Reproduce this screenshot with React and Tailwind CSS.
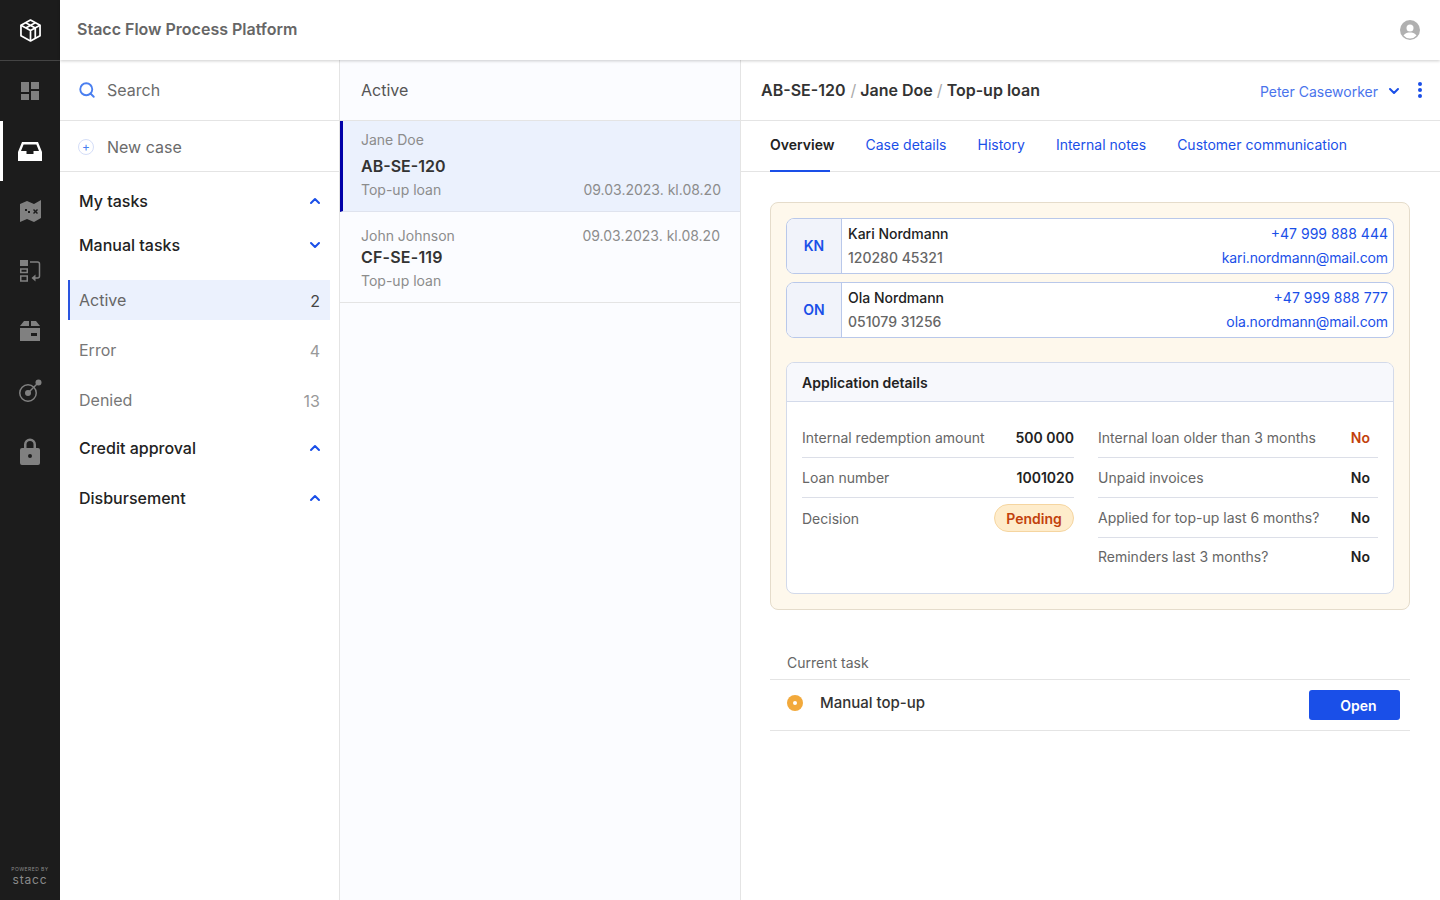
import { ChevronDown, ChevronUp, Search } from 'lucide-react';

const railIcons = [
  <svg key="dash" viewBox="0 0 18 18" className="w-[18px] h-[18px]" fill="#808080">
    <path d="M0 0h8v10H0zM10 0h8v7h-8zM0 12h8v6H0zM10 9h8v9h-8z" />
  </svg>,
  <svg key="inbox" viewBox="0 0 24 19" className="w-6 h-[19px]" fill="#fff">
    <path fillRule="evenodd" d="M4 0h16l4 10v9H0v-9zM5.600 2.400 3 9h5.500v3h7V9H21l-2.600-6.600z" />
  </svg>,
  <svg key="map" viewBox="0 0 21 22" className="w-[21px] h-[22px]" fill="#808080">
    <path fillRule="evenodd" d="M0 4 7 1l7 3 7-4v18l-7 4-7-3-7 3zM5 9h2v2H5zM8 11h2v2H8zM14 9l1.500 1.500L17 9l1 1-1.500 1.500L18 13l-1 1-1.500-1.500L14 14l-1-1 1.500-1.500L13 10z" />
  </svg>,
  <svg key="steps" viewBox="0 0 21 22" className="w-[21px] h-[22px]" fill="none">
    <path d="M0 0h8v6H0z" fill="#808080" />
    <path d="M.75 9h6.500v3.500H.75zM.75 16h6.500v5H.75z" stroke="#808080" strokeWidth="1.500" />
    <path d="M10 2h7.500a2 2 0 0 1 2 2v12a2 2 0 0 1-2 2H13" stroke="#808080" strokeWidth="1.500" />
    <path d="M15.500 14.500 11.500 18l4 3.500z" fill="#808080" />
  </svg>,
  <svg key="box" viewBox="0 0 20 20" className="w-5 h-5" fill="#808080">
    <path fillRule="evenodd" d="M4 0h5v5H0zM11 0h5l4 5h-9zM0 7h20v13H0zM11 12v3h6v-3z" />
  </svg>,
  <svg key="target" viewBox="0 0 24 24" className="w-6 h-6" fill="none">
    <circle cx="10" cy="14" r="8.250" stroke="#808080" strokeWidth="1.500" />
    <circle cx="10" cy="14" r="3" fill="#808080" />
    <path d="M10 14 20 4" stroke="#808080" strokeWidth="1.500" />
    <circle cx="20.500" cy="3.500" r="3" fill="#808080" />
  </svg>,
  <svg key="lock" viewBox="0 0 20 27" className="w-5 h-[27px]" fill="#808080">
    <path fillRule="evenodd" d="M4 10V6.500a6 6 0 0 1 12 0V10h2a2 2 0 0 1 2 2v13a2 2 0 0 1-2 2H2a2 2 0 0 1-2-2V12a2 2 0 0 1 2-2zM6.500 10h7V6.500a3.500 3.500 0 0 0-7 0zM10 16a2 2 0 1 0 0 4 2 2 0 0 0 0-4z" />
  </svg>,
];

function Rail() {
  return (
    <div className="w-[60px] shrink-0 bg-[#1c1c1c] flex flex-col">
      <div className="h-[61px] flex items-center justify-center border-b border-[#444]">
        <svg viewBox="0 0 22 24" className="w-[21px] h-[23px]" fill="none" stroke="#fff" strokeWidth="1.800" strokeLinejoin="round">
          <path d="M11 1 21 6.500v11L11 23 1 17.500v-11z" />
          <path d="M1 6.500 11 12l10-5.500M11 12v11M6 3.800l10 5.500v11M16 3.800 6 9.300" />
        </svg>
      </div>
      {railIcons.map((icon, i) => (
        <div
          key={i}
          className={`h-[60px] flex items-center justify-center border-l-[3px] pr-[3px] ${i === 1 ? 'border-white' : 'border-transparent'}`}
        >
          {icon}
        </div>
      ))}
      <div className="mt-auto pb-[14px] flex flex-col items-center text-[#8a8a8a]">
        <span className="text-[5px] leading-[6px] tracking-[0.45px] mb-[2px]">POWERED BY</span>
        <span className="text-[12px] leading-[12px] tracking-[0.8px]">stacc</span>
      </div>
    </div>
  );
}

function Group({ label, open, className }) {
  return (
    <div className={`flex items-center justify-between pl-[19px] pr-[16px] ${className}`}>
      <span className="text-[16px] font-medium text-[#222]">{label}</span>
      {open ? (
        <ChevronDown size={16} strokeWidth={3} className="text-[#1a4fe8]" />
      ) : (
        <ChevronUp size={16} strokeWidth={3} className="text-[#1a4fe8]" />
      )}
    </div>
  );
}

function FilterRow({ label, count, active }) {
  return (
    <div
      className={`h-10 ml-2 mr-[9px] flex items-center justify-between pr-[10px] text-[16px] ${
        active ? 'bg-[#ebf1fd] border-l-2 border-[#2a55e0] pl-[9px] text-[#666]' : 'pl-[11px] text-[#777]'
      }`}
    >
      <span>{label}</span>
      <span className={`mt-[2px] ${active ? 'text-[#444]' : 'text-[#999]'}`}>{count}</span>
    </div>
  );
}

function Sidebar() {
  return (
    <div className="w-[280px] shrink-0 border-r border-[#e4e4e4] flex flex-col">
      <div className="h-[61px] flex items-center gap-[11px] pl-[18px] border-b border-[#e4e4e4]">
        <Search size={18} strokeWidth={2.5} className="text-[#4a7ff0]" />
        <span className="text-[16px] text-[#6b6b6b]">Search</span>
      </div>
      <div className="h-[51px] flex items-center gap-[13px] pl-[18px] pt-[2px] border-b border-[#e4e4e4]">
        <span className="w-4 h-4 rounded-full border border-[#d5def8] flex items-center justify-center text-[12px] leading-none text-[#4a7ff0]">
          +
        </span>
        <span className="text-[16px] text-[#6b6b6b]">New case</span>
      </div>
      <Group label="My tasks" className="h-[24px] mt-[17px]" />
      <Group label="Manual tasks" open className="h-[24px] mt-[20px]" />
      <div className="mt-[23px] flex flex-col gap-[10px]">
        <FilterRow label="Active" count="2" active />
        <FilterRow label="Error" count="4" />
        <FilterRow label="Denied" count="13" />
      </div>
      <Group label="Credit approval" className="h-[24px] mt-[16px]" />
      <Group label="Disbursement" className="h-[24px] mt-[26px]" />
    </div>
  );
}

function CaseList() {
  return (
    <div className="w-[401px] shrink-0 bg-[#fbfcff] border-r border-[#e4e4e4] flex flex-col">
      <div className="h-[61px] flex items-center pl-[21px] border-b border-[#e4e4e4] text-[16px] text-[#555]">Active</div>
      <div className="h-[91px] bg-[#ebf1fd] border-l-[3px] border-b border-l-[#0000a8] border-b-[#dfe3ee] pl-[18px] pr-[19px]">
        <div className="text-[14px] leading-[20px] text-[#8c8c8c] pt-[9px]">Jane Doe</div>
        <div className="text-[16px] leading-[24px] font-semibold text-[#333] mt-[4px]">AB-SE-120</div>
        <div className="flex justify-between text-[14px] leading-[20px] text-[#8c8c8c] mt-[2px]">
          <span>Top-up loan</span>
          <span>09.03.2023. kl.08.20</span>
        </div>
      </div>
      <div className="h-[91px] border-b border-[#e4e4e4] pl-[21px] pr-[20px] pt-[14px]">
        <div className="flex justify-between text-[14px] leading-[20px] text-[#8c8c8c]">
          <span>John Johnson</span>
          <span>09.03.2023. kl.08.20</span>
        </div>
        <div className="text-[16px] leading-[22px] font-semibold text-[#333] tracking-[0.2px]">CF-SE-119</div>
        <div className="text-[14px] leading-[20px] text-[#8c8c8c] mt-[3px]">Top-up loan</div>
      </div>
    </div>
  );
}

function Person({ initials, name, id, phone, mail }) {
  return (
    <div className="h-14 rounded-lg border border-[#b9c8ea] bg-white flex overflow-hidden">
      <div className="w-[55px] shrink-0 bg-[#f1f3fa] border-r border-[#b9c8ea] pb-[2px] flex items-center justify-center text-[14px] font-semibold text-[#1a4fe8]">
        {initials}
      </div>
      <div className="flex-1 flex justify-between pl-[6px] pr-[5px] pt-[3px] text-[14px] leading-[24px]">
        <div>
          <div className="font-medium text-[#222]">{name}</div>
          <div className="text-[#666] font-medium">{id}</div>
        </div>
        <div className="text-right text-[#1a4fe8]">
          <div>{phone}</div>
          <div className="tracking-[-0.1px]">{mail}</div>
        </div>
      </div>
    </div>
  );
}

function Row({ label, value, last, valueClass = 'text-[#222]' }) {
  return (
    <div className={`h-10 flex items-center justify-between text-[14px] ${last ? 'pb-[3px]' : 'border-b border-[#dcdfe8]'}`}>
      <span className="text-[#666]">{label}</span>
      {value && <span className={`font-semibold ${valueClass}`}>{value}</span>}
    </div>
  );
}

function Details() {
  return (
    <div className="mt-6 h-[232px] rounded-lg border border-[#d3daea] bg-white overflow-hidden">
      <div className="h-[39px] bg-[#f7f8fc] border-b border-[#d3daea] flex items-center pl-[15px] text-[14px] font-semibold text-[#222]">
        Application details
      </div>
      <div className="grid grid-cols-2 gap-x-4 pl-[15px] pr-[15px] pt-4">
        <div>
          <div className="w-[272px]">
            <Row label="Internal redemption amount" value="500 000" />
            <Row label="Loan number" value="1001020" />
            <div className="h-10 flex items-center justify-between text-[14px]">
              <span className="text-[#666]">Decision</span>
              <span className="h-[28px] w-20 rounded-full bg-[#feeccb] border border-[#f5d5a0] flex items-center justify-center font-semibold text-[#c2410c]">
                Pending
              </span>
            </div>
          </div>
        </div>
        <div>
          <Row label="Internal loan older than 3 months" value={<span className="mr-2">No</span>} valueClass="text-[#c2410c]" />
          <Row label="Unpaid invoices" value={<span className="mr-2">No</span>} />
          <Row label="Applied for top-up last 6 months?" value={<span className="mr-2">No</span>} />
          <Row label="Reminders last 3 months?" value={<span className="mr-2">No</span>} last />
        </div>
      </div>
    </div>
  );
}

function Detail() {
  return (
    <div className="flex-1 flex flex-col min-w-0">
      <div className="h-[61px] flex items-center justify-between pl-5 pr-[18px] border-b border-[#e4e4e4]">
        <div className="text-[16px] font-semibold text-[#333]">
          AB-SE-120 <span className="font-normal text-[#aaa] ml-px">/</span> Jane Doe{' '}
          <span className="font-normal text-[#aaa]">/</span> Top-up loan
        </div>
        <div className="flex items-center">
          <span className="text-[14px] text-[#4a74ec] mt-[2px]">Peter Caseworker</span>
          <ChevronDown size={16} strokeWidth={3} className="text-[#1a4fe8] ml-2 mt-[2px]" />
          <svg viewBox="0 0 4 16" className="w-1 h-4 ml-4" fill="#1a4fe8">
            <circle cx="2" cy="2" r="2" />
            <circle cx="2" cy="8" r="2" />
            <circle cx="2" cy="14" r="2" />
          </svg>
        </div>
      </div>
      <div className="h-[51px] flex items-stretch gap-[31px] pl-[29px] border-b border-[#e4e4e4] text-[14px] text-[#1a4fe8]">
        <div className="relative flex items-center font-semibold text-[#222] pb-[3px]">
          Overview
          <div className="absolute left-0 right-[4px] -bottom-px h-[2px] bg-[#1a4fe8]" />
        </div>
        <div className="flex items-center pb-[3px]">Case details</div>
        <div className="flex items-center pb-[3px]">History</div>
        <div className="flex items-center pb-[3px]">Internal notes</div>
        <div className="flex items-center pb-[3px]">Customer communication</div>
      </div>
      <div className="pl-[29px] pr-[30px] pt-[30px]">
        <div className="h-[408px] rounded-lg border border-[#e5dccb] bg-[#fef8ec] p-[15px]">
          <div className="flex flex-col gap-2">
            <Person initials="KN" name="Kari Nordmann" id="120280 45321" phone="+47 999 888 444" mail="kari.nordmann@mail.com" />
            <Person initials="ON" name="Ola Nordmann" id="051079 31256" phone="+47 999 888 777" mail="ola.nordmann@mail.com" />
          </div>
          <Details />
        </div>
        <div className="mt-[43px] pl-[17px] pb-[6px] text-[14px] leading-[20px] text-[#666] border-b border-[#e4e4e4]">Current task</div>
        <div className="h-[51px] flex items-center pl-[17px] pr-[10px] border-b border-[#e4e4e4]">
          <div className="flex items-center mb-[4px]">
            <span className="w-4 h-4 rounded-full bg-[#f2a93b] flex items-center justify-center">
              <span className="w-1 h-1 rounded-full bg-white" />
            </span>
            <span className="ml-[17px] text-[15px] font-medium text-[#333]">Manual top-up</span>
          </div>
          <button className="ml-auto w-[91px] h-[30px] rounded-[3px] bg-[#1a4fe8] text-white text-[14px] font-semibold pl-2">Open</button>
        </div>
      </div>
    </div>
  );
}

export default function App() {
  return (
    <div className="h-screen flex overflow-hidden bg-white font-['Inter',sans-serif]">
      <Rail />
      <div className="flex-1 flex flex-col min-w-0">
        <div className="h-[60px] shrink-0 flex items-center justify-between pl-[17px] pr-5 shadow-[0_1px_3px_rgba(0,0,0,0.2)] relative z-10 bg-white">
          <span className="text-[16px] font-semibold text-[#666] mb-[2px]">Stacc Flow Process Platform</span>
          <svg viewBox="0 0 20 20" className="w-5 h-5">
            <circle cx="10" cy="10" r="10" fill="#b0b0b0" />
            <circle cx="10" cy="8" r="3.500" fill="#fff" />
            <path d="M3.500 15.500C5 13 8 12.500 10 12.500s5 .5 6.500 3A8.500 8.500 0 0 1 10 18.500a8.500 8.500 0 0 1-6.500-3z" fill="#fff" />
          </svg>
        </div>
        <div className="flex-1 flex min-h-0">
          <Sidebar />
          <CaseList />
          <Detail />
        </div>
      </div>
    </div>
  );
}
